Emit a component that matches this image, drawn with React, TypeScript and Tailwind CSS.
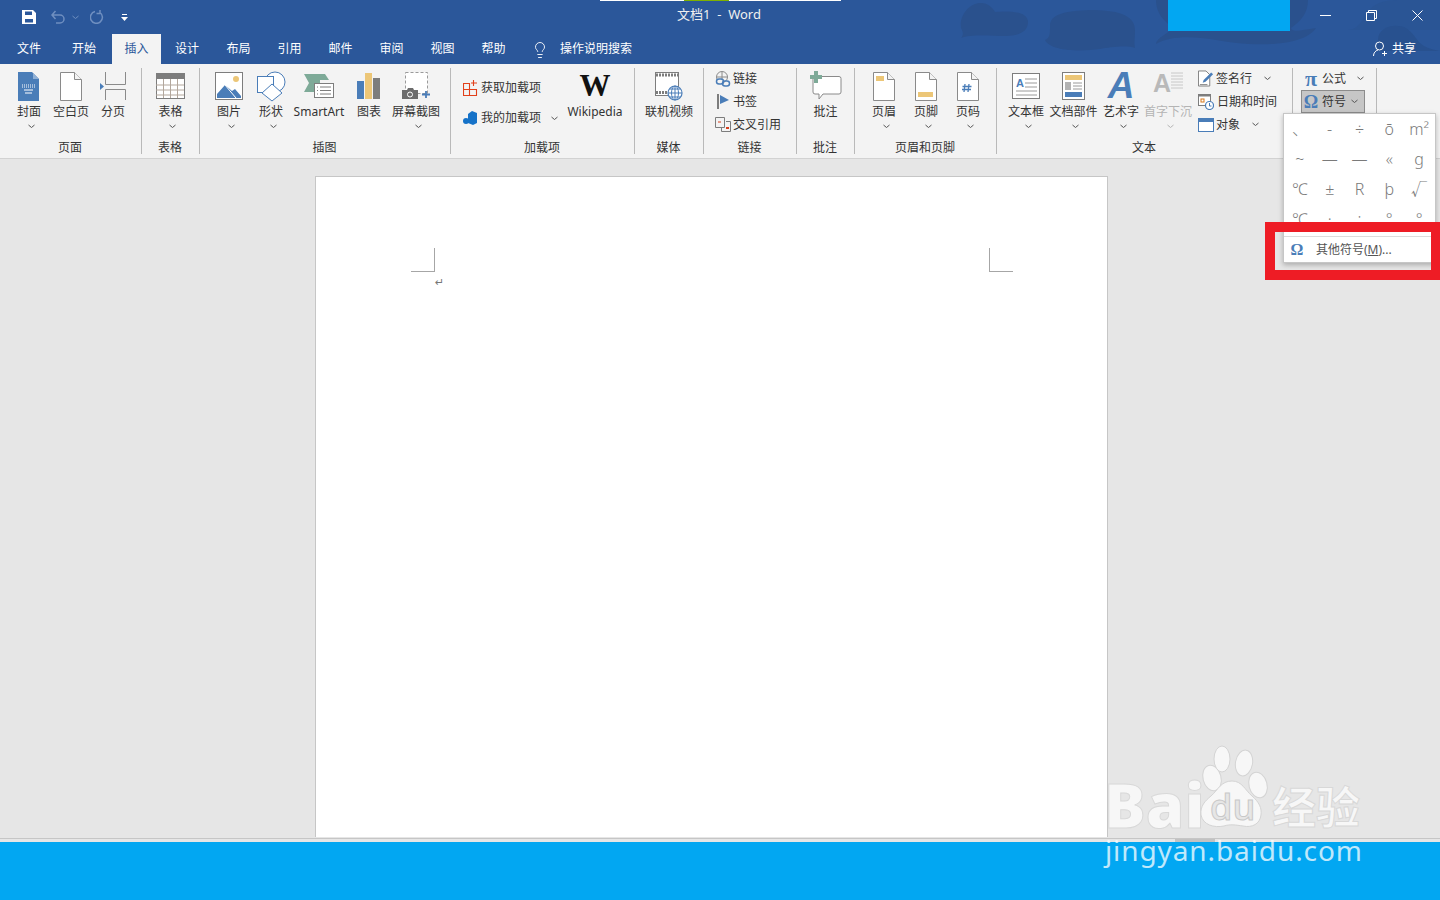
import { ReactNode } from "react";
import { Lightbulb } from "lucide-react";

const BLUE = "#4a7db8";

function Chevron({ color = "#555" }: { color?: string }) {
  return (
    <svg width="7" height="5" viewBox="0 0 7 5" fill="none">
      <path d="M.5 1l3 2.5L6.500 1" stroke={color} strokeWidth="1" />
    </svg>
  );
}

function BigButton({ w, label, icon, more = true, muted = false }: { w: number; label: string; icon: ReactNode; more?: boolean; muted?: boolean }) {
  return (
    <div className="flex flex-col items-center pt-[2px]" style={{ width: w }}>
      <div className="h-[32px] flex items-center justify-center">{icon}</div>
      <div className={`mt-[2px] leading-[16px] whitespace-nowrap ${muted ? "text-[#b4b4b4]" : ""}`}>{label}</div>
      {more && (
        <div className="mt-[4px] ml-[4px] h-[5px] flex">
          <Chevron color={muted ? "#b4b4b4" : "#555"} />
        </div>
      )}
    </div>
  );
}

function Group({ w, caption, children, className = "" }: { w: number; caption?: string; children: ReactNode; className?: string }) {
  return (
    <div className="flex flex-col shrink-0 border-r border-[#b9b9b9]" style={{ width: w }}>
      <div className={`h-[72px] flex ${className}`}>{children}</div>
      <div className="h-[14px] leading-[15px] text-center pr-[1px]">{caption}</div>
    </div>
  );
}

function SmallRow({ icon, label, more, h = 23, gap = 2 }: { icon: ReactNode; label: string; more?: number; h?: number; gap?: number }) {
  return (
    <div className="flex items-center whitespace-nowrap" style={{ height: h, gap }}>
      <div className="w-[16px] flex justify-center shrink-0">{icon}</div>
      <span>{label}</span>
      {more !== undefined && (
        <span className="flex" style={{ marginLeft: more }}>
          <Chevron />
        </span>
      )}
    </div>
  );
}

const Page = ({ children }: { children?: ReactNode }) => (
  <svg width="22" height="29" viewBox="0 0 22 29">
    <path d="M.5.5h14l7 7v21H.500z" fill="#fff" stroke="#8a8a8a" />
    <path d="M14.500.5v7h7" fill="#f3f3f3" stroke="#8a8a8a" />
    {children}
  </svg>
);

const CoverIcon = () => (
  <svg width="22" height="29" viewBox="0 0 22 29">
    <path d="M0 0h14l7 7v22H0z" fill={BLUE} />
    <path d="M15 1l6 6h-6z" fill="#8fb0d6" />
    <path d="M4 13h13M4 15h13" stroke="#fff" strokeDasharray="1 1" />
    <path d="M6 18h9M7 21h7" stroke="#fff" />
  </svg>
);

const BreakIcon = () => (
  <svg width="26" height="29" viewBox="0 0 26 29" fill="none" stroke="#8a8a8a">
    <path d="M5.500 0v12.500h20V0M5.500 28V17.500h20V28" />
    <path d="M0 11l4 3.500L0 18z" fill={BLUE} stroke="none" />
  </svg>
);

const TableIcon = () => (
  <svg width="29" height="26" viewBox="0 0 29 26">
    <rect x=".5" y=".5" width="28" height="25" fill="#fff" stroke="#7d7d7d" />
    <rect width="29" height="6" fill="#7d7d7d" />
    <path d="M0 12h28M0 17h28M0 22h28M7.500 6v19M14.500 6v19M21.500 6v19" stroke="#b3a79c" />
  </svg>
);

const PictureIcon = () => (
  <svg width="28" height="28" viewBox="0 0 28 28">
    <rect x=".5" y=".5" width="27" height="27" fill="#fff" stroke="#7d7d7d" />
    <circle cx="21" cy="7" r="3" fill="#ecc677" />
    <path d="M2 26v-4l8-9 7 6 3-2 6 7v2z" fill={BLUE} />
    <path d="M10 13l11 13" stroke="#fff" />
  </svg>
);

const ShapesIcon = () => (
  <svg width="30" height="31" viewBox="0 0 30 31" fill="none">
    <circle cx="19" cy="11" r="10" fill="#fff" stroke={BLUE} />
    <rect x="1.500" y="5.500" width="16" height="16" fill="#fff" stroke={BLUE} />
    <path d="M16 13l10 9-10 8-10-8z" fill="#fff" stroke={BLUE} />
  </svg>
);

const SmartArtIcon = () => (
  <svg width="30" height="24" viewBox="0 0 30 24">
    <path d="M0 0h21l4 6h-9v12H0l5-9z" fill="#7eaa98" />
    <rect x="10.500" y="9.500" width="19" height="14" fill="#fff" stroke="#7d7d7d" />
    <path d="M13 13h1M16 13h11M13 16.500h1M16 16.500h11M13 20h1M16 20h11" stroke="#7d7d7d" />
  </svg>
);

const ChartIcon = () => (
  <svg width="24" height="26" viewBox="0 0 24 26">
    <rect y="8" width="7" height="18" fill={BLUE} />
    <rect x="8" width="7" height="26" fill="#ecc677" />
    <rect x="16" y="5" width="7" height="21" fill="#7d7d7d" />
  </svg>
);

const ScreenshotIcon = () => (
  <svg width="29" height="28" viewBox="0 0 29 28" fill="none">
    <rect x="3.500" y=".5" width="22" height="21" stroke="#9a9a9a" strokeDasharray="3 2" fill="#fff" />
    <path d="M0 18h5l1-2h5l1 2h4v9H0z" fill="#6c6c6c" />
    <circle cx="8" cy="22.500" r="2.500" fill="#6c6c6c" stroke="#fff" />
    <path d="M24 19v7M20 22.500h8" stroke={BLUE} strokeWidth="1.800" />
  </svg>
);

const StoreIcon = () => (
  <svg width="15" height="16" viewBox="0 0 15 16" fill="none">
    <path d="M.5 3.500h6v12h-6zM.5 9.500h13v6h-7M10.500 0v6M8 3h6" stroke="#e2401a" strokeWidth="1.100" />
  </svg>
);

const MyAddinIcon = () => (
  <svg width="15" height="15" viewBox="0 0 15 15" fill="#1572c8">
    <path d="M5 3l4-3 5 2v10l-4 2-5-2z" />
    <circle cx="3" cy="10" r="3" />
  </svg>
);

const VideoIcon = () => (
  <svg width="28" height="29" viewBox="0 0 28 29" fill="none">
    <rect x=".5" y=".5" width="23" height="23" fill="#fff" stroke="#7d7d7d" />
    <path d="M1 3h22M1 20.500h22" stroke="#7d7d7d" strokeWidth="3" strokeDasharray="2 1" />
    <circle cx="20" cy="21" r="7" fill="#fff" stroke={BLUE} strokeWidth="1.200" />
    <path d="M13 21h14M20 14v14M15 17h10M15 25h10" stroke={BLUE} />
    <ellipse cx="20" cy="21" rx="3.500" ry="7" stroke={BLUE} />
  </svg>
);

const LinkIcon = () => (
  <svg width="16" height="16" viewBox="0 0 16 16" fill="none">
    <circle cx="7" cy="6" r="5.500" stroke="#8a8a8a" />
    <path d="M2 6h10M7 1v10" stroke="#8a8a8a" />
    <rect x="1.500" y="8" width="7" height="5" rx="2.500" stroke={BLUE} strokeWidth="1.500" fill="#f3f3f3" />
    <rect x="7.500" y="10" width="7" height="5" rx="2.500" stroke={BLUE} strokeWidth="1.500" />
  </svg>
);

const BookmarkIcon = () => (
  <svg width="12" height="15" viewBox="0 0 12 15">
    <rect width="2" height="15" fill="#7d7d7d" />
    <path d="M3 1l9 5-9 4z" fill={BLUE} />
  </svg>
);

const CrossRefIcon = () => (
  <svg width="16" height="15" viewBox="0 0 16 15" fill="none" stroke="#7d7d7d">
    <path d="M.5.500h9v10h-9zM11 4.500h4.500v10h-9V11" />
    <path d="M3 5h3" stroke="#d8401f" />
    <path d="M11 10h3v2h-3z" fill="#d8401f" stroke="none" />
  </svg>
);

const CommentIcon = () => (
  <svg width="32" height="30" viewBox="0 0 32 30">
    <path d="M3 5.500h26a2 2 0 0 1 2 2V21a2 2 0 0 1-2 2H13l-4 5v-5H5a2 2 0 0 1-2-2z" fill="#fff" stroke="#8a8a8a" />
    <path d="M4 0h4v4h4v4H8v4H4V8H0V4h4z" fill="#7eaa98" />
  </svg>
);

const TextBoxIcon = () => (
  <svg width="28" height="26" viewBox="0 0 28 26">
    <rect x=".5" y=".5" width="27" height="25" fill="#fff" stroke="#7d7d7d" />
    <text x="4" y="14" fontSize="11" fontWeight="700" fill={BLUE} fontFamily="Liberation Sans">A</text>
    <path d="M13 6h12M13 10h12M13 14h12M4 18h21M4 22h21" stroke="#9a9a9a" />
  </svg>
);

const PartsIcon = () => (
  <svg width="23" height="28" viewBox="0 0 23 28">
    <rect x=".5" y=".5" width="22" height="27" fill="#fff" stroke="#7d7d7d" />
    <rect x="3" y="3" width="17" height="5" fill="#ecc677" />
    <rect x="3" y="10" width="6" height="8" fill="#b3b3b3" />
    <path d="M11 11h9M11 14h9M11 17h9" stroke="#9a9a9a" />
    <rect x="3" y="20" width="17" height="5" fill={BLUE} />
  </svg>
);

const SignatureIcon = () => (
  <svg width="17" height="17" viewBox="0 0 17 17" fill="none">
    <path d="M.5.5h8l4 4v12H.5z" stroke="#7d7d7d" fill="#fff" />
    <path d="M5 13l1-3 8-8 2 2-8 8z" fill={BLUE} />
    <path d="M2 15h8" stroke="#7d7d7d" />
  </svg>
);

const DateIcon = () => (
  <svg width="16" height="16" viewBox="0 0 16 16" fill="none">
    <rect x=".5" y=".5" width="12" height="11" stroke="#7d7d7d" fill="#fff" />
    <path d="M0 1.500h13" stroke="#7d7d7d" strokeWidth="2" />
    <rect x="3" y="5" width="3" height="3" stroke="#d97a1f" />
    <circle cx="11.500" cy="11.500" r="4" fill="#fff" stroke={BLUE} strokeWidth="1.200" />
    <path d="M11.500 9v3h2" stroke={BLUE} />
  </svg>
);

const ObjectIcon = () => (
  <svg width="16" height="14" viewBox="0 0 16 14">
    <rect x=".5" y=".5" width="15" height="13" fill="#fff" stroke={BLUE} />
    <rect width="16" height="4" fill={BLUE} />
  </svg>
);

const symbols = ["、", "-", "÷", "ō", "m²", "~", "—", "—", "«", "g", "℃", "±", "R", "þ", "√", "℃", "·", ":", "°", "°"];

export default function App() {
  return (
    <div className="relative w-[1440px] h-[900px] overflow-hidden flex flex-col bg-[#e6e6e6] text-[12px] text-[#333] [font-family:'Noto_Sans','Noto_Sans_CJK_SC',sans-serif]">
      {/* title + tabs */}
      <div className="relative bg-[#2b579a] text-white shrink-0">
        <svg className="absolute right-0 top-0" width="510" height="64" viewBox="0 0 510 64">
          <g fill="#2a518d">
            <path d="M31 38c3-3 2-6 0-10-2-12 8-25 20-25 7 0 12 5 14 9 10-1 33-2 33 10 0 10-10 14-22 14-15 0-35-2-45 2z" />
            <path d="M115 40c5-2 5-6 5-14 0-12 15-15 40-16 25 0 45 4 45 20 0 8-1 12 0 18-8-3-25-1-35 1-20 3-50 2-55-9z" />
            <path d="M226 0c0 15 10 22 17 28-4 5-17 10-17 16 15-8 35-8 60-4 25 5 85 10 100-12-15 2-24 5-25 0 10-7 17-15 17-28z" />
          </g>
          <path d="M418 30c10 0 14-10 20-18 5-8 15-12 30-12h42v30h-30c-15 0-45 0-62 0z" fill="#2a5595" />
          <path d="M448 40c0-10 10-15 20-14 10 0 15 8 20 15 5 6 12 8 22 10h-62c-4 0 0-5 0-11z" fill="#28518f" />
        </svg>
        <div className="relative h-[34px] flex items-center">
          <div className="w-[677px] flex items-center pl-[22px] shrink-0">
            <svg width="14" height="14" viewBox="0 0 14 14" fill="#fff">
              <path d="M0 0h11l3 3v11H0zM3 1.500V5h7V1.500zM3 9v3.500h8V9z" fillRule="evenodd" />
            </svg>
            <svg className="ml-[15px]" width="15" height="14" viewBox="0 0 15 14" fill="none" stroke="#6f8fc0" strokeWidth="1.500">
              <path d="M1 5h8a4 4 0 0 1 0 8H5M4.500 1L1 5l3.500 4" />
            </svg>
            <span className="ml-[6px] flex">
              <Chevron color="#6f8fc0" />
            </span>
            <svg className="ml-[11px]" width="14" height="14" viewBox="0 0 14 14" fill="none" stroke="#6f8fc0" strokeWidth="1.500">
              <path d="M10 2.500a6 6 0 1 1-5-1M10 0v3.500H6.500" />
            </svg>
            <svg className="ml-[17px]" width="7" height="7" viewBox="0 0 7 7" fill="#fff">
              <path d="M1 0h5v1H1zM0 3h7L3.500 7z" />
            </svg>
          </div>
          <div className="whitespace-pre text-[13px] text-[#f0f0f0] -mt-[4px]">文档1  -  Word</div>
          <div className="ml-auto flex -mt-[3px]">
            <div className="w-[46px] h-[34px] flex items-center justify-center">
              <svg width="11" height="1"><rect width="11" height="1" fill="#fff" /></svg>
            </div>
            <div className="w-[46px] h-[34px] flex items-center justify-center">
              <svg width="11" height="11" viewBox="0 0 11 11" fill="none" stroke="#fff">
                <path d="M.5 2.500h8v8h-8zM2.500 2.500v-2h8v8h-2" />
              </svg>
            </div>
            <div className="w-[46px] h-[34px] flex items-center justify-center">
              <svg width="11" height="11" viewBox="0 0 11 11" stroke="#fff">
                <path d="M.5.5l10 10M10.500.5l-10 10" />
              </svg>
            </div>
          </div>
        </div>
        <div className="relative h-[30px] flex items-center">
          <div className="w-[58px] text-center -mt-[1px]">文件</div>
          <div className="w-[54px] pr-[2px] text-center -mt-[1px]">开始</div>
          <div className="w-[49px] h-full bg-[#f3f3f3] text-[#2b579a] flex items-center justify-center">插入</div>
          <div className="w-[52px] text-center -mt-[1px]">设计</div>
          <div className="w-[51px] text-center -mt-[1px]">布局</div>
          <div className="w-[51px] text-center -mt-[1px]">引用</div>
          <div className="w-[51px] text-center -mt-[1px]">邮件</div>
          <div className="w-[51px] text-center -mt-[1px]">审阅</div>
          <div className="w-[51px] text-center -mt-[1px]">视图</div>
          <div className="w-[51px] text-center -mt-[1px]">帮助</div>
          <Lightbulb className="ml-[12px] mt-[1px]" size={18} strokeWidth={1.200} />
          <div className="ml-[11px] -mt-[1px]">操作说明搜索</div>
          <div className="ml-auto mr-[24px] flex items-center gap-[4px] -mt-[1px]">
            <svg width="15" height="16" viewBox="0 0 15 16" fill="none" stroke="#fff">
              <circle cx="6.500" cy="5" r="4" />
              <path d="M.5 15c0-3 2-5.500 4.500-6M11.500 10v5M9 12.500h5" />
            </svg>
            <span>共享</span>
          </div>
        </div>
      </div>

      {/* ribbon */}
      <div className="h-[95px] shrink-0 bg-[#f3f3f3] border-b border-[#d2d2d2] py-[4px] flex">
        <Group w={142} caption="页面" className="pl-[8px]">
          <BigButton w={42} label="封面" icon={<CoverIcon />} />
          <BigButton w={42} label="空白页" icon={<Page />} more={false} />
          <BigButton w={42} label="分页" icon={<BreakIcon />} more={false} />
        </Group>
        <Group w={58} caption="表格" className="justify-center">
          <BigButton w={42} label="表格" icon={<TableIcon />} />
        </Group>
        <Group w={251} caption="插图" className="pl-[8px]">
          <BigButton w={42} label="图片" icon={<PictureIcon />} />
          <BigButton w={42} label="形状" icon={<ShapesIcon />} />
          <BigButton w={54} label="SmartArt" icon={<SmartArtIcon />} more={false} />
          <BigButton w={46} label="图表" icon={<ChartIcon />} more={false} />
          <BigButton w={48} label="屏幕截图" icon={<ScreenshotIcon />} />
        </Group>
        <Group w={184} caption="加载项" className="pl-[11px]">
          <div className="w-[104px] pt-[5px] flex flex-col">
            <SmallRow h={30} gap={3} icon={<StoreIcon />} label="获取加载项" />
            <SmallRow h={30} gap={3} icon={<MyAddinIcon />} label="我的加载项" more={7} />
          </div>
          <div className="w-[58px] flex flex-col items-center pt-[2px]">
            <div className="h-[32px] leading-[32px] text-[31px] font-bold text-[#111] [font-family:'Liberation_Serif',serif]">W</div>
            <div className="mt-[2px] leading-[16px]">Wikipedia</div>
          </div>
        </Group>
        <Group w={69} caption="媒体" className="justify-center">
          <BigButton w={60} label="联机视频" icon={<VideoIcon />} more={false} />
        </Group>
        <Group w={93} caption="链接" className="pl-[11px]">
          <div className="-mt-[1px]">
            <SmallRow icon={<LinkIcon />} label="链接" />
            <SmallRow icon={<BookmarkIcon />} label="书签" />
            <SmallRow icon={<CrossRefIcon />} label="交叉引用" />
          </div>
        </Group>
        <Group w={58} caption="批注" className="justify-center">
          <BigButton w={42} label="批注" icon={<CommentIcon />} more={false} />
        </Group>
        <Group w={142} caption="页眉和页脚" className="pl-[8px]">
          <BigButton w={42} label="页眉" icon={<Page><rect x="3" y="4" width="8" height="5" fill="#ecc677" /></Page>} />
          <BigButton w={42} label="页脚" icon={<Page><rect x="3" y="20" width="15" height="5" fill="#ecc677" /></Page>} />
          <BigButton w={42} label="页码" icon={<Page><path d="M8 12l-1 8M12 12l-1 8M5.500 14.500h9M5 17.500h9" stroke={BLUE} strokeWidth="1.300" /></Page>} />
        </Group>
        <Group w={296} caption="文本" className="pl-[7px]">
          <BigButton w={44} label="文本框" icon={<TextBoxIcon />} />
          <BigButton w={51} label="文档部件" icon={<PartsIcon />} />
          <BigButton w={44} label="艺术字" icon={<span className="text-[37px] leading-[32px] font-bold italic text-[#4a7db8] [font-family:'Liberation_Sans',sans-serif]">A</span>} />
          <BigButton
            w={50}
            label="首字下沉"
            muted
            icon={
              <div className="flex items-start">
                <span className="text-[25px] leading-[23px] font-bold text-[#b9b9b9] [font-family:'Liberation_Sans',sans-serif]">A</span>
                <svg width="12" height="28" viewBox="0 0 12 28" stroke="#c8c8c8">
                  <path d="M0 1h12M0 4h12M0 7h12M0 10h12M0 13h12M0 16h12" />
                </svg>
              </div>
            }
          />
          <div className="-mt-[1px] pl-[5px]">
            <SmallRow icon={<SignatureIcon />} label="签名行" more={10} />
            <SmallRow icon={<DateIcon />} label="日期和时间" gap={3} />
            <SmallRow icon={<ObjectIcon />} label="对象" more={10} />
          </div>
        </Group>
        <Group w={84} className="pl-[8px]">
          <div className="-mt-[1px]">
            <div className="h-[23px] flex items-center whitespace-nowrap">
              <span className="w-[20px] text-center text-[22px] leading-[20px] font-bold text-[#4a7db8] [font-family:'Liberation_Serif',serif]">π</span>
              <span className="ml-[1px]">公式</span>
              <span className="ml-[11px] flex"><Chevron /></span>
            </div>
            <div className="h-[23px] w-[64px] flex items-center whitespace-nowrap bg-[#c6c6c6] border border-[#8c8c8c]">
              <span className="w-[18px] text-center text-[18px] leading-[20px] font-bold text-[#4a7db8] [font-family:'Liberation_Serif',serif]">Ω</span>
              <span className="ml-[2px]">符号</span>
              <span className="ml-[5px] flex"><Chevron /></span>
            </div>
          </div>
        </Group>
      </div>

      {/* document */}
      <div className="flex-1 flex justify-center pr-[17px] pt-[17px] min-h-0">
        <div className="w-[793px] h-[661px] bg-white border border-b-0 border-[#c6c6c6] pt-[71px] pl-[95px] pr-[94px]">
          <div className="flex justify-between">
            <div className="w-[24px] h-[24px] border-r border-b border-[#a6a6a6]" />
            <div className="w-[24px] h-[24px] border-l border-b border-[#a6a6a6]" />
          </div>
          <div className="ml-[24px] mt-[2px] leading-[18px] text-[11px] text-[#777] [font-family:'DejaVu_Sans',sans-serif]">↵</div>
        </div>
      </div>
      <div className="relative h-[4px] shrink-0 border-t border-[#c6c6c6]">
        <div className="ml-[1175px] w-[40px] h-[3px] bg-[#c2c2c2]" />
      </div>
      <div className="h-[58px] shrink-0 bg-[#02a7f2]" />

      {/* cover-ups on the title bar */}
      <div className="absolute left-[1168px] top-0 w-[122px] h-[31px] bg-[#02a7f2]" />
      <div className="absolute left-[600px] top-0 w-[241px] h-[1px] bg-white">
        <div className="ml-[84px] w-[45px] h-[1px] bg-[#7fb000]" />
      </div>

      {/* symbol dropdown */}
      <div className="absolute left-[1283px] top-[113px] w-[153px] h-[150px] bg-white border border-[#c6c6c6] shadow-[0_2px_5px_rgba(0,0,0,0.25)] overflow-hidden">
        <div className="grid grid-cols-5 px-[1px]">
          {symbols.map((s, i) => (
            <div key={i} className="h-[30px] flex items-center justify-center text-[16px] font-light text-[#7a7a7a]">
              {s}
            </div>
          ))}
        </div>
        <div className="absolute left-0 right-0 top-[122px] border-t border-[#dcdcdc] h-[27px] flex items-center">
          <span className="w-[26px] text-center text-[16px] font-bold text-[#4a7db8] [font-family:'Liberation_Serif',serif]">Ω</span>
          <span className="ml-[6px] text-[#555] text-[12px]">
            其他符号(<span className="underline">M</span>)...
          </span>
        </div>
      </div>

      {/* red highlight */}
      <div className="absolute left-[1265px] top-[222px] w-[175px] h-[58px] border-[10px] border-r-[9px] border-[#ee1c25]" />

      {/* watermark */}
      <div className="absolute left-[1107px] top-[745px] w-[255px] h-[125px] text-[#f7f7f7] pointer-events-none">
        <div className="absolute left-[-3px] top-[28px] text-[62px] leading-[62px] font-extrabold [font-family:'Open_Sans',sans-serif] [-webkit-text-stroke:1px_#d8d8d8]">Bai</div>
        <svg className="absolute left-[90px] top-0" width="90" height="86" viewBox="0 0 90 86" fill="#f7f7f7" stroke="#d4d4d4">
          <ellipse cx="15" cy="33" rx="9" ry="13" transform="rotate(-15 15 33)" />
          <ellipse cx="25" cy="14" rx="8" ry="13" />
          <ellipse cx="47" cy="18" rx="8.500" ry="13" transform="rotate(10 47 18)" />
          <ellipse cx="61" cy="40" rx="9" ry="13" transform="rotate(-15 61 40)" />
          <path d="M35 36c10 0 13 9 20 15 7 6 10 12 9 19-1 9-9 13-18 11-7-1-13-2-19 0-10 2-21-1-23-11-1-9 4-14 10-19 7-6 10-15 21-15z" />
          <text x="13" y="75" fontSize="36" fontWeight="600" fill="#e6e6e6" stroke="#c8c8c8" fontFamily="Open Sans">du</text>
        </svg>
        <div className="absolute left-[165px] top-[34px] text-[44px] leading-[52px] font-bold [font-family:'Noto_Sans_CJK_SC',sans-serif] [-webkit-text-stroke:1px_#d8d8d8]">经验</div>
        <div className="absolute left-[-2px] top-[87px] text-[28px] leading-[36px] tracking-[0.9px] whitespace-nowrap text-white/75 [font-family:'Noto_Sans',sans-serif]">jingyan.baidu.com</div>
      </div>
    </div>
  );
}
